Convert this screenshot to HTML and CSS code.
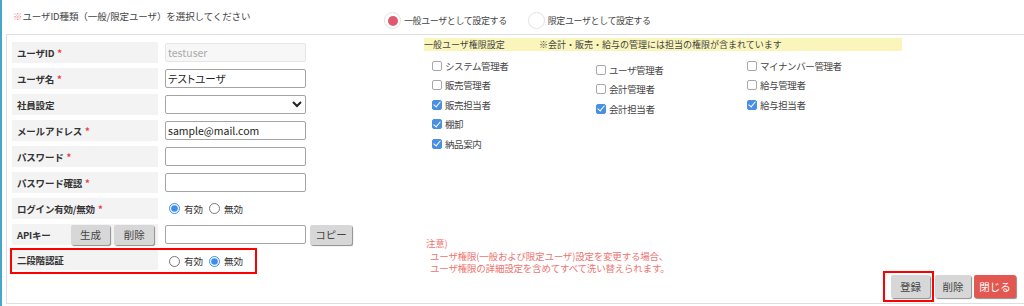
FILE: index.html
```html
<!DOCTYPE html>
<html lang="ja">
<head>
  <meta charset="UTF-8" />
  <title>ユーザ設定</title>
  <link rel="stylesheet" href="styles.css">
</head>
<body>
  <div class="page">

    <!-- User kind -->
    <div class="head">
      <p class="lead"><span class="mark">※</span>ユーザID種類（一般/限定ユーザ）を選択してください</p>
      <div class="kind">
        <label class="kind-opt"><span class="dot on"></span>一般ユーザとして設定する</label>
        <label class="kind-opt"><span class="dot"></span>限定ユーザとして設定する</label>
      </div>
    </div>

    <div class="panel">

      <!-- Basic info -->
      <div class="form">
        <div class="row">
          <div class="lbl">ユーザID <span class="req">*</span></div>
          <div class="val"><input class="txt" type="text" value="testuser" disabled></div>
        </div>
        <div class="row">
          <div class="lbl">ユーザ名 <span class="req">*</span></div>
          <div class="val"><input class="txt" type="text" value="テストユーザ"></div>
        </div>
        <div class="row">
          <div class="lbl">社員設定</div>
          <div class="val"><select class="txt"><option></option></select></div>
        </div>
        <div class="row">
          <div class="lbl">メールアドレス <span class="req">*</span></div>
          <div class="val"><input class="txt" type="text" value="sample@mail.com"></div>
        </div>
        <div class="row">
          <div class="lbl">パスワード <span class="req">*</span></div>
          <div class="val"><input class="txt" type="password"></div>
        </div>
        <div class="row">
          <div class="lbl">パスワード確認 <span class="req">*</span></div>
          <div class="val"><input class="txt" type="password"></div>
        </div>
        <div class="row">
          <div class="lbl">ログイン有効/無効 <span class="req">*</span></div>
          <div class="val">
            <label class="opt"><input type="radio" name="login" checked>有効</label>
            <label class="opt"><input type="radio" name="login">無効</label>
          </div>
        </div>
        <div class="row">
          <div class="lbl">
            <span class="api">APIキー</span>
            <button class="btn">生成</button>
            <button class="btn">削除</button>
          </div>
          <div class="val">
            <input class="txt" type="text">
            <button class="btn btn-copy">コピー</button>
          </div>
        </div>
        <div class="row row-hl">
          <div class="lbl">二段階認証</div>
          <div class="val">
            <label class="opt"><input type="radio" name="twofa">有効</label>
            <label class="opt"><input type="radio" name="twofa" checked>無効</label>
          </div>
        </div>
      </div>

      <!-- Permissions -->
      <div class="perm">
        <div class="perm-head">
          <span class="perm-title">一般ユーザ権限設定</span>
          <span>※会計・販売・給与の管理には担当の権限が含まれています</span>
        </div>
        <div class="perm-cols">
          <div class="col col-1">
            <label class="chk"><input type="checkbox">システム管理者</label>
            <label class="chk"><input type="checkbox">販売管理者</label>
            <label class="chk"><input type="checkbox" checked>販売担当者</label>
            <label class="chk"><input type="checkbox" checked>棚卸</label>
            <label class="chk"><input type="checkbox" checked>納品案内</label>
          </div>
          <div class="col col-2">
            <label class="chk"><input type="checkbox">ユーザ管理者</label>
            <label class="chk"><input type="checkbox">会計管理者</label>
            <label class="chk"><input type="checkbox" checked>会計担当者</label>
          </div>
          <div class="col col-3">
            <label class="chk"><input type="checkbox">マイナンバー管理者</label>
            <label class="chk"><input type="checkbox">給与管理者</label>
            <label class="chk"><input type="checkbox" checked>給与担当者</label>
          </div>
        </div>

        <div class="foot">
          <div class="note">
            <div>注意)</div>
            <div class="note-line">ユーザ権限(一般および限定ユーザ)設定を変更する場合、</div>
            <div class="note-line">ユーザ権限の詳細設定を含めてすべて洗い替えられます。</div>
          </div>
          <div class="actions">
            <span class="hl-box"><button class="btn btn-lg">登録</button></span>
            <button class="btn btn-lg btn-del">削除</button>
            <button class="btn btn-lg btn-close">閉じる</button>
          </div>
        </div>
      </div>

    </div>
  </div>
</body>
</html>
```

FILE: styles.css
```css
* {
  margin: 0;
  padding: 0;
  box-sizing: border-box;
  font-family: "Noto Sans CJK JP", "Noto Sans", sans-serif;
}

body {
  background: #fff;
  color: #333;
  font-size: 9px;
  overflow: hidden;
}

.page {
  height: 306px;
  border-left: 2px solid #47a7c6;
}

/* Header */
.head {
  display: flex;
  height: 34px;
}

.lead {
  width: 371px;
  margin: 9px 0 0 11px;
  line-height: 14px;
  font-size: 9.5px;
  letter-spacing: -0.1px;
  color: #444;
}

.lead .mark {
  color: #f08a8a;
}

.kind {
  display: flex;
  gap: 21px;
  margin-top: 12px;
}

.kind-opt {
  display: flex;
  align-items: center;
  height: 17px;
  font-size: 9px;
  letter-spacing: -0.4px;
  color: #444;
}

.dot {
  width: 17px;
  height: 17px;
  margin-right: 3px;
  border-radius: 50%;
  border: 1px solid #e2e2e2;
  display: flex;
  align-items: center;
  justify-content: center;
}

.dot.on::after {
  content: "";
  width: 10px;
  height: 10px;
  border-radius: 50%;
  background: #e05a6e;
}

/* Panel */
.panel {
  display: flex;
  height: 270px;
  margin-left: 4px;
  border: 1px solid #dedede;
  border-right: none;
}

.form {
  width: 416px;
  padding: 7px 0 0 5px;
}

.row {
  display: flex;
  height: 21px;
  margin-bottom: 5px;
}

.lbl {
  width: 146px;
  display: flex;
  align-items: center;
  padding-left: 5px;
  background: #f3f3f3;
  font-size: 9.5px;
  font-weight: bold;
  letter-spacing: -0.2px;
  color: #333;
}

.req {
  color: #f03c3c;
  margin-left: 3px;
}

.val {
  display: flex;
  align-items: center;
  margin-left: 7px;
}

.txt {
  width: 141px;
  height: 19px;
  padding: 0 2px;
  border: 1px solid #a4a4a4;
  border-radius: 2px;
  font-size: 10.5px;
  font-feature-settings: "palt";
  color: #222;
  background: #fff;
}

.txt:disabled {
  background: #f7f7f7;
  border-color: #e6e6e6;
  color: #aaa;
}

.opt {
  display: flex;
  align-items: center;
  margin-right: 2px;
  font-size: 9.5px;
  color: #333;
}

.opt input {
  width: 11px;
  height: 11px;
  margin: 0 4px 0 4px;
  accent-color: #3d8fe6;
}

.api {
  width: 54px;
}

.btn {
  height: 20px;
  border: none;
  border-radius: 2px;
  background: #d7d7d7;
  box-shadow: 1px 1px 1px #8d8d8d;
  font-size: 10.5px;
  letter-spacing: 0;
  color: #444;
  font-weight: normal;
  cursor: pointer;
}

.lbl .btn {
  width: 40px;
  margin-right: 4px;
}

.btn-copy {
  width: 42px;
  margin-left: 4px;
}

.row-hl {
  width: 243px;
  height: 22px;
  margin-top: 1px;
  outline: 2px solid #f00;
}

.row-hl .lbl {
  height: 20px;
}

/* Permissions */
.perm {
  flex: 1;
  display: flex;
  flex-direction: column;
  padding: 3px 0 0 1px;
}

.perm-head {
  display: flex;
  width: 478px;
  height: 13px;
  line-height: 13px;
  background: #faf6bb;
  color: #444;
}

.perm-title {
  width: 115px;
}

.perm-cols {
  display: flex;
  margin-top: 5px;
}

.col {
  display: flex;
  flex-direction: column;
}

.col-1 {
  width: 172px;
  padding-left: 8px;
}

.col-2 {
  width: 151px;
  padding-top: 4px;
}

.chk {
  display: flex;
  align-items: center;
  height: 19.5px;
  font-size: 9.5px;
  letter-spacing: -0.4px;
  color: #444;
}

.chk input {
  appearance: none;
  width: 10px;
  height: 10px;
  margin: 0 3px 0 0;
  border: 1px solid #a8a8a8;
  border-radius: 2px;
  background: #fff;
  display: flex;
  align-items: center;
  justify-content: center;
}

.chk input:checked {
  border-color: #4a90e2;
  background: #4a90e2;
}

.chk input:checked::after {
  content: "";
  width: 3px;
  height: 6px;
  margin-top: -2px;
  border: solid #fff;
  border-width: 0 1.5px 1.5px 0;
  transform: rotate(40deg);
}

/* Footer */
.foot {
  display: flex;
  justify-content: space-between;
  align-items: flex-start;
  margin-top: auto;
  margin-bottom: 1px;
}

.note {
  padding-left: 2px;
  line-height: 12.5px;
  font-size: 9.5px;
  letter-spacing: -0.2px;
  color: #ec7470;
}

.note-line {
  padding-left: 4px;
}

.actions {
  display: flex;
  align-items: center;
  margin: 34px 8px 0 0;
}

.hl-box {
  display: flex;
  padding: 2px 2px 2px 6px;
  border: 2px solid #f00;
}

.btn-lg {
  height: 23px;
  width: 39px;
  font-size: 10.5px;
}

.btn-del {
  width: 36px;
  margin-left: 1px;
}

.btn-close {
  width: 42px;
  margin-left: 3px;
  background: #e2574f;
  color: #fff;
}
```
